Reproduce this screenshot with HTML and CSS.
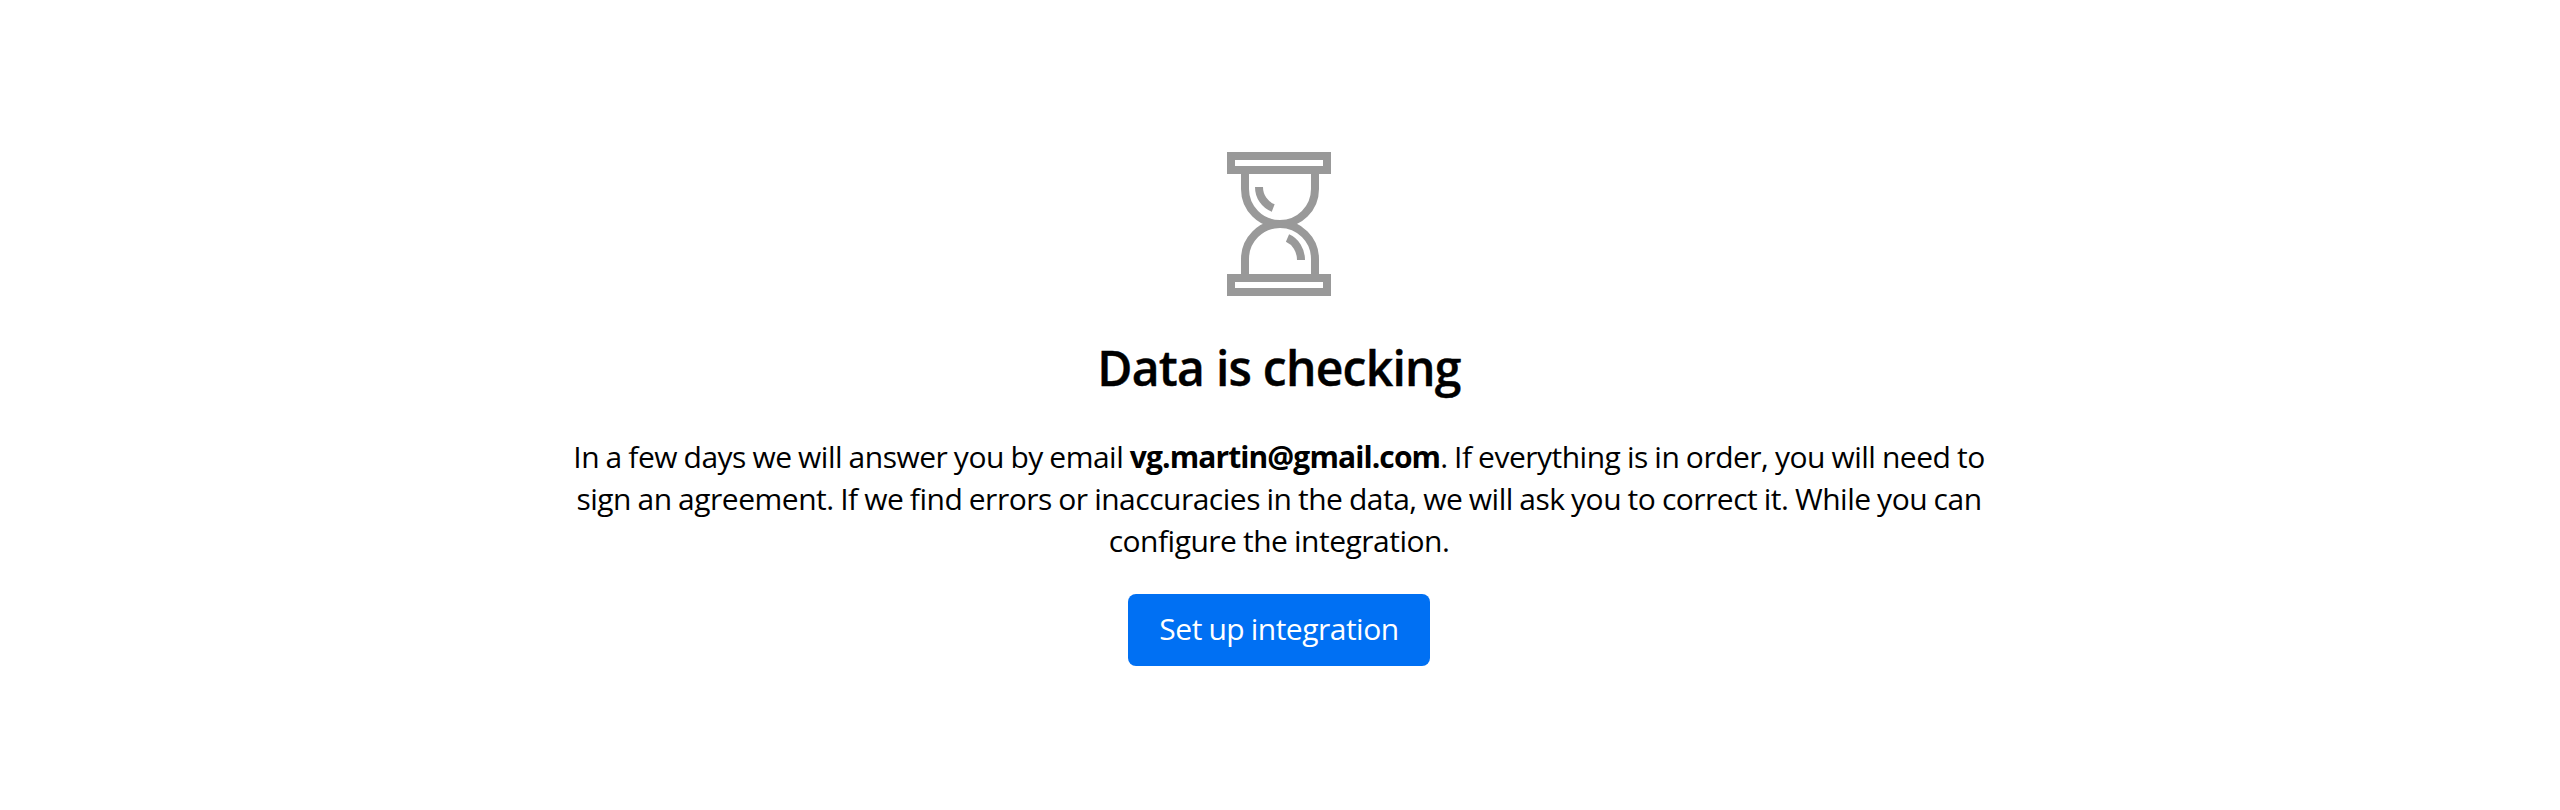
FILE: index.html
```html
<!DOCTYPE html>
<html lang="en">
<head>
<meta charset="utf-8">
<title>Data is checking</title>
<link rel="stylesheet" href="styles.css">
</head>
<body>
<main class="status">
  <svg class="status-icon" viewBox="0 0 104 144" fill="none" stroke="currentColor" stroke-width="8" aria-hidden="true">
    <path d="M4 4h96v14H4zM4 126h96v14H4z"/>
    <path d="M18 18v19a35 35 0 0 0 70 0V18M18 126v-19a35 35 0 0 1 70 0v19"/>
    <path d="M32 35c0 9.500 5.700 17.700 14.200 21M60.500 86c8 3.500 13.500 12 13.500 22"/>
  </svg>
  <h1 class="status-title">Data is checking</h1>
  <p class="status-text">
    <span class="line">In a few days we will answer you by email <b class="email">vg.martin@gmail.com</b>. If everything is in order, you will need to</span>
    <span class="line">sign an agreement. If we find errors or inaccuracies in the data, we will ask you to correct it. While you can</span>
    <span class="line">configure the integration.</span>
  </p>
  <button class="status-button" type="button">Set up integration</button>
</main>
</body>
</html>
```
FILE: styles.css
```css
body {
  margin: 0;
  background: #fff;
  color: #000;
  font-family: "Open Sans", "Noto Sans", sans-serif;
}

.status {
  display: flex;
  flex-direction: column;
  align-items: center;
  box-sizing: border-box;
  height: 810px;
  padding: 152px 2px 0 0;
}

.status-icon {
  flex: none;
  width: 104px;
  height: 144px;
  color: #999;
}

.status-title {
  margin: 42px 0 0;
  font-size: 48px;
  font-weight: 600;
  line-height: 60px;
  letter-spacing: -0.75px;
  white-space: nowrap;
  -webkit-text-stroke: 0.4px currentColor;
}

.status-text {
  margin: 38px 0 0;
  font-size: 30px;
  line-height: 42px;
  letter-spacing: -0.5px;
  word-spacing: -0.75px;
  text-align: center;
}

.line {
  display: block;
  white-space: nowrap;
}

.email {
  font-weight: 700;
  letter-spacing: -0.9px;
}

.status-button {
  box-sizing: border-box;
  width: 302px;
  height: 72px;
  margin: 32px 0 0;
  padding: 0 0 2px;
  border: 0;
  border-radius: 8px;
  background: #0070f3;
  color: #fff;
  font: 400 30px/70px "Open Sans", "Noto Sans", sans-serif;
  letter-spacing: -0.5px;
  word-spacing: -0.75px;
}
```
